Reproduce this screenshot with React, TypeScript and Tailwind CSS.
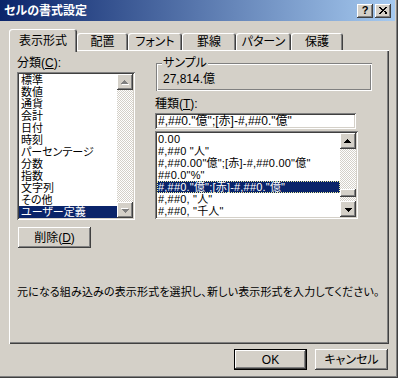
import React from 'react'

const raised =
  'shadow-[inset_-1px_-1px_#404040,inset_1px_1px_#ffffff,inset_-2px_-2px_#808080,inset_2px_2px_#d4d0c8]'
const sunken =
  'shadow-[inset_1px_1px_#808080,inset_-1px_-1px_#ffffff,inset_2px_2px_#404040,inset_-2px_-2px_#d4d0c8]'
const etched =
  'shadow-[inset_1px_1px_#808080,inset_-1px_-1px_#ffffff,inset_2px_2px_#ffffff,inset_-2px_-2px_#808080]'
const dither =
  'bg-[image:repeating-conic-gradient(#d4d0c8_0_25%,#ffffff_0_50%)] bg-[length:2px_2px]'

const tabs = [
  { label: '表示形式', w: 'w-[68px]', active: true },
  { label: '配置', w: 'w-[51px]' },
  { label: 'フォント', w: 'w-[54px]' },
  { label: '罫線', w: 'w-[54px]' },
  { label: 'パターン', w: 'w-[55px]' },
  { label: '保護', w: 'w-[52px]' },
]

const categories = [
  '標準',
  '数値',
  '通貨',
  '会計',
  '日付',
  '時刻',
  'パーセンテージ',
  '分数',
  '指数',
  '文字列',
  'その他',
  'ユーザー定義',
]

const formats = [
  '0.00',
  '#,##0 "人"',
  '#,##0.00"億";[赤]-#,##0.00"億"',
  '##0.0"%"',
  '#,##0."億";[赤]-#,##0."億"',
  '#,##0, "人"',
  '#,##0, "千人"',
]

function Arrow({ dir, disabled }: { dir: 'up' | 'down'; disabled?: boolean }) {
  const tri = (fill: string, dx: number) => (
    <g fill={fill} transform={`translate(${dx} ${dx})`}>
      <rect x="3" y="0" width="1" height="1" />
      <rect x="2" y="1" width="3" height="1" />
      <rect x="1" y="2" width="5" height="1" />
      <rect x="0" y="3" width="7" height="1" />
    </g>
  )
  return (
    <div className={`w-[16px] h-[16px] shrink-0 bg-[#d4d0c8] ${raised} flex items-center justify-center`}>
      <svg
        width="8"
        height="5"
        viewBox="0 0 8 5"
        shapeRendering="crispEdges"
        className={dir === 'down' ? 'rotate-180' : ''}
      >
        {disabled && tri('#ffffff', 1)}
        {tri(disabled ? '#808080' : '#000000', 0)}
      </svg>
    </div>
  )
}

function Tab({ label, w, active }: { label: string; w: string; active?: boolean }) {
  return (
    <div
      className={`${w} ${
        active ? 'h-[23px] -mb-[2px] relative z-10' : 'h-[17px]'
      } bg-[#d4d0c8] rounded-t-[3px] shadow-[inset_1px_1px_#ffffff,inset_-1px_0_#404040,inset_-2px_0_#808080] flex items-center justify-center`}
    >
      {label}
    </div>
  )
}

export default function App() {
  return (
    <div className="w-[398px] h-[378px] bg-[#d4d0c8] text-black text-[12px] leading-[12px] font-['Liberation_Sans','Noto_Sans_CJK_JP',sans-serif] [font-feature-settings:'palt'] shadow-[inset_-1px_-1px_#404040,inset_-2px_-2px_#808080] flex flex-col overflow-hidden">
      {/* title bar */}
      <div className="h-[21px] mr-[3px] shrink-0 bg-[linear-gradient(to_right,#0a246a,#a6caf0)] flex items-center pl-[4px] pr-[4px]">
        <span className="text-white font-bold">セルの書式設定</span>
        <div className="ml-auto flex gap-[2px]">
          <div className={`w-[16px] h-[14px] bg-[#d4d0c8] ${raised} flex items-center justify-center font-bold text-[11px] leading-[11px]`}>
            ?
          </div>
          <div className={`w-[16px] h-[14px] bg-[#d4d0c8] ${raised} flex items-center justify-center`}>
            <svg width="8" height="7" viewBox="0 0 8 7" shapeRendering="crispEdges">
              <path d="M0 0h2v1h-2zM1 1h2v1h-2zM2 2h2v1h-2zM3 3h2v1h-2zM2 4h2v1h-2zM1 5h2v1h-2zM0 6h2v1h-2z" />
              <path d="M6 0h2v1h-2zM5 1h2v1h-2zM4 2h2v1h-2zM5 4h2v1h-2zM6 5h2v1h-2zM6 6h2v1h-2z" />
            </svg>
          </div>
        </div>
      </div>

      {/* tabs */}
      <div className="h-[29px] shrink-0 flex items-end pl-[9px]">
        {tabs.map((t) => (
          <Tab key={t.label} label={t.label} w={t.w} active={t.active} />
        ))}
      </div>

      {/* panel */}
      <div className="ml-[9px] w-[380px] h-[294px] shrink-0 shadow-[inset_1px_1px_#ffffff,inset_-1px_-1px_#404040,inset_-2px_-2px_#808080] pl-[8px] pt-[7px] flex flex-col">
        <div className="flex">
          {/* left column */}
          <div className="w-[118px] flex flex-col">
            <div className="h-[12px]">
              分類(<span className="underline">C</span>):
            </div>
            <div className={`mt-[3px] h-[148px] bg-white ${sunken} p-[2px] flex`}>
              <div className="flex-1 overflow-hidden text-[11px]">
                {categories.map((c) => (
                  <div
                    key={c}
                    className={`h-[12px] leading-[12px] pl-[2px] whitespace-nowrap ${
                      c === 'ユーザー定義' ? 'bg-[#0a246a] text-white' : ''
                    }`}
                  >
                    {c}
                  </div>
                ))}
              </div>
              <div className="w-[16px] flex flex-col">
                <Arrow dir="up" disabled />
                <div className={`flex-1 ${dither}`} />
                <Arrow dir="down" disabled />
              </div>
            </div>
            <button
              className={`mt-[7px] ml-[1px] w-[73px] h-[21px] bg-[#d4d0c8] ${raised} flex items-center justify-center`}
            >
              削除(<span className="underline">D</span>)
            </button>
          </div>

          {/* right column */}
          <div className="ml-[20px] w-[217px] flex flex-col">
            <div className="relative pt-[6px]">
              <div className={`ml-[1px] w-[216px] h-[28px] ${etched} pl-[7px] pt-[10px]`}>27,814.億</div>
              <span className="absolute top-0 left-[7px] px-[1px] bg-[#d4d0c8]">サンプル</span>
            </div>
            <div className="mt-[7px] h-[12px]">
              種類(<span className="underline">T</span>):
            </div>
            <div className={`mt-[3px] w-[201px] h-[16px] bg-white ${sunken} pl-[3px] pt-[2px] whitespace-nowrap overflow-hidden`}>
              {'#,##0."億";[赤]-#,##0."億"'}
            </div>
            <div className={`mt-[2px] w-[203px] h-[88px] bg-white ${sunken} p-[2px] flex`}>
              <div className="flex-1 overflow-hidden text-[11px] tracking-[0.2px]">
                {formats.map((f, i) => (
                  <div
                    key={f}
                    className={`h-[12px] leading-[12px] pl-[1px] whitespace-nowrap ${
                      i === 4
                        ? 'bg-[#0a246a] text-white outline outline-1 outline-dotted outline-[#f0f0a0] -outline-offset-1'
                        : ''
                    }`}
                  >
                    {f}
                  </div>
                ))}
              </div>
              <div className="w-[16px] flex flex-col">
                <Arrow dir="up" />
                <div className={`flex-1 ${dither}`} />
                <div className={`h-[8px] bg-[#d4d0c8] ${raised}`} />
                <div className={`h-[4px] ${dither}`} />
                <Arrow dir="down" />
              </div>
            </div>
          </div>
        </div>

        <div className="mt-[38px] whitespace-nowrap text-[11px] tracking-[0.15px]">
          元になる組み込みの表示形式を選択し、新しい表示形式を入力してください。
        </div>
      </div>

      {/* buttons */}
      <div className="mt-[5px] flex justify-end gap-[8px] pr-[10px]">
        <button
          className="w-[73px] h-[21px] bg-[#d4d0c8] shadow-[inset_0_0_0_1px_#000000,inset_-2px_-2px_#404040,inset_2px_2px_#ffffff,inset_-3px_-3px_#808080] flex items-center justify-center"
        >
          OK
        </button>
        <button className={`w-[73px] h-[21px] bg-[#d4d0c8] ${raised} flex items-center justify-center`}>
          キャンセル
        </button>
      </div>
    </div>
  )
}
